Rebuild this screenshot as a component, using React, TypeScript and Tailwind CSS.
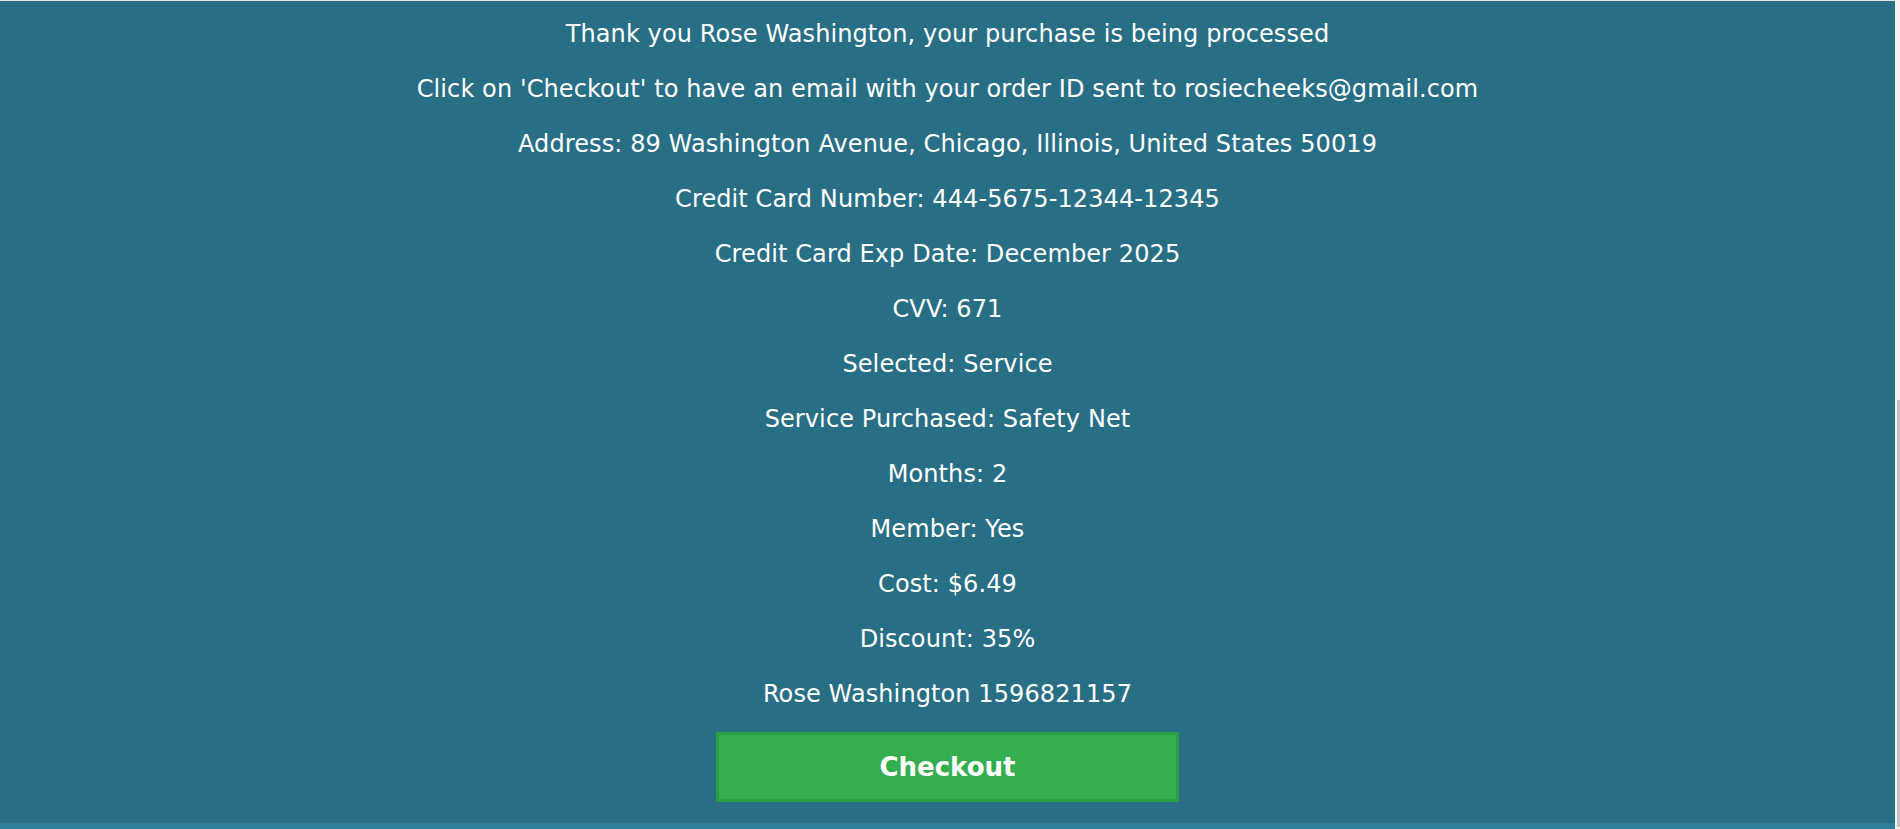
import React from "react";

const lines = [
  "Thank you Rose Washington, your purchase is being processed",
  "Click on 'Checkout' to have an email with your order ID sent to rosiecheeks@gmail.com",
  "Address: 89 Washington Avenue, Chicago, Illinois, United States 50019",
  "Credit Card Number: 444-5675-12344-12345",
  "Credit Card Exp Date: December 2025",
  "CVV: 671",
  "Selected: Service",
  "Service Purchased: Safety Net",
  "Months: 2",
  "Member: Yes",
  "Cost: $6.49",
  "Discount: 35%",
  "Rose Washington 1596821157",
];

export default function App() {
  return (
    <div
      className="flex h-[829px] w-full overflow-hidden"
      style={{ fontFamily: '"DejaVu Sans", Verdana, sans-serif' }}
    >
      <div className="flex min-w-0 flex-1 flex-col">
        <div className="h-px bg-[#e4e4e4]" />
        <div className="flex flex-1 flex-col items-center bg-[#286f85] pt-[19px] text-white">
          <div className="flex flex-col items-center gap-[26px]">
            {lines.map((l) => (
              <p key={l} className="text-[24px] leading-[29px] tracking-[0.1px] whitespace-nowrap">
                {l}
              </p>
            ))}
          </div>
          <button
            type="button"
            className="mt-[23px] flex h-[70px] w-[463px] items-center justify-center border-[3px] border-[#2a9e45] bg-[#34ae4f] pt-[1px] text-[26px] font-bold text-white"
          >
            Checkout
          </button>
        </div>
        <div className="h-[6px] bg-[#2e8099]" />
      </div>
      <div className="flex w-[5px] flex-col bg-[#f1f1f1] pl-[2px]">
        <div className="h-[400px]" />
        <div className="h-[427px] bg-[#c1c1c1]" />
      </div>
    </div>
  );
}
